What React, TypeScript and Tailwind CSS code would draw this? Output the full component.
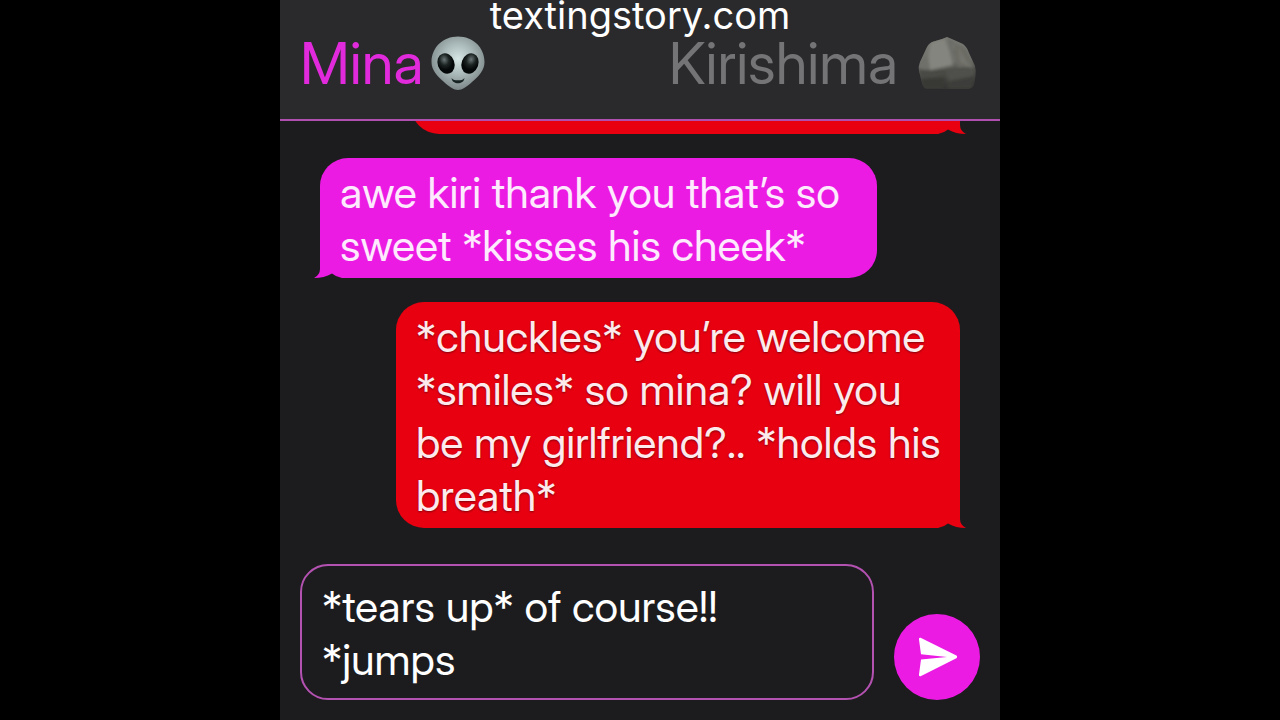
import type { ReactNode } from "react";

function AlienIcon() {
  return (
    <svg viewBox="0 0 54 54" className="size-[54px] shrink-0" role="img" aria-label="alien">
      <defs>
        <radialGradient id="skin" cx="0.5" cy="0.42" r="0.58">
          <stop offset="0" stopColor="#d6e6e5" />
          <stop offset="0.5" stopColor="#a9b8b8" />
          <stop offset="1" stopColor="#7c8788" />
        </radialGradient>
        <radialGradient id="eye" cx="0.48" cy="0.3" r="0.5">
          <stop offset="0" stopColor="#6c7676" />
          <stop offset="0.55" stopColor="#1c2323" />
          <stop offset="1" stopColor="#050808" />
        </radialGradient>
      </defs>
      <path
        d="M27 0.5C42 0.5 53.5 11.5 53.5 26C53.5 34 48 40 41 46C36 50.5 31 54 27 54C23 54 18 50.5 13 46C6 40 0.5 34 0.5 26C0.5 11.5 12 0.5 27 0.5Z"
        fill="url(#skin)"
      />
      <ellipse cx="15" cy="27.5" rx="8.4" ry="10.5" transform="rotate(-20 15 27.5)" fill="url(#eye)" />
      <ellipse cx="39" cy="27.5" rx="8.4" ry="10.5" transform="rotate(20 39 27.5)" fill="url(#eye)" />
      <path d="M20.5 42C22 44 24 44.3 27 44.3C30 44.3 32 44 33.5 42C33 46 30 47.2 27 47.2C24 47.2 21 46 20.5 42Z" fill="#172322" />
    </svg>
  );
}

function RockIcon() {
  return (
    <svg viewBox="0 0 58 54" className="h-[54px] w-[58px] shrink-0" role="img" aria-label="rock">
      <defs>
        <linearGradient id="stone" x1="0" y1="0" x2="0.15" y2="1">
          <stop offset="0" stopColor="#7d7d77" />
          <stop offset="0.55" stopColor="#6e6e69" />
          <stop offset="0.72" stopColor="#4d4d49" />
          <stop offset="1" stopColor="#343432" />
        </linearGradient>
        <filter id="soft" x="-10%" y="-10%" width="120%" height="120%">
          <feGaussianBlur stdDeviation="1.8" />
        </filter>
        <clipPath id="edge">
          <path d="M29 1L36 4L45 8Q49 11 51 17L57 30Q58 34 57.500 40L56 49Q54 53 49 53L9 53Q5 52 4 47L1 35Q0 31 2 26L8 13Q10 8 14 6L24 3Z" />
        </clipPath>
      </defs>
      <g clipPath="url(#edge)">
        <rect width="58" height="54" fill="url(#stone)" />
        <g filter="url(#soft)">
          <path d="M13 6L26 3L31 14L35 29L12 34L10 22Z" fill="#85857f" />
          <path d="M29 1L38 7L34 9L37 22L32 14Z" fill="#6b6b67" />
          <path d="M37 7L48 13L56 31L40 31L36 17Z" fill="#6a6a64" />
          <path d="M40 10L49 26L55 33L42 26Z" fill="#74746e" />
          <path d="M2 27L10 19L12 33L2 34Z" fill="#70706a" />
          <path d="M1 33L13 35L28 34L28 42L14 42L3 43Z" fill="#494945" />
          <path d="M3 43L27 41L25 53L5 53Z" fill="#383835" />
          <path d="M28 33L57 32L55 45L31 47Z" fill="#50504b" />
          <path d="M30 45L56 40L54 53L29 53Z" fill="#3e3e3a" />
        </g>
      </g>
    </svg>
  );
}

function SendIcon() {
  return (
    <svg viewBox="0 0 40 40" className="size-10" aria-hidden="true">
      <path d="M3.6 0.8L39.4 18.6Q41 20 39.4 21.2L3.600 39.2Q1.800 39.6 2 37.6L4 22.6L30 20L4 17.2L2 2.4Q1.800 0.4 3.600 0.8Z" fill="#fff" />
    </svg>
  );
}

function Tail({ className }: { className: string }) {
  return (
    <svg viewBox="0 0 28 30" className={className} aria-hidden="true">
      <path d="M6 0H28V30Q22 29 18 25.5Q10 30 0 30Q6 27 6 21Z" fill="currentColor" />
    </svg>
  );
}

function Bubble({ side, width, children }: { side: "left" | "right"; width: string; children: ReactNode }) {
  const left = side === "left";
  return (
    <div
      className={`relative shrink-0 px-5 pt-2 pb-1.5 text-[43px] leading-[53px] ${width} ${
        left ? "self-start text-[#ec1be4]" : "self-end text-[#e80011]"
      }`}
    >
      <div
        className={`absolute inset-0 rounded-[28px] bg-current ${
          left
            ? "rounded-bl-none [clip-path:polygon(0_0,100%_0,100%_100%,22px_100%,22px_calc(100%_-_30px),0_calc(100%_-_30px))]"
            : "rounded-br-none [clip-path:polygon(0_0,100%_0,100%_calc(100%_-_30px),calc(100%_-_22px)_calc(100%_-_30px),calc(100%_-_22px)_100%,0_100%)]"
        }`}
      />
      <Tail
        className={`absolute bottom-0 h-[30px] w-7 ${left ? "-left-[6px]" : "-right-[6px] -scale-x-100"}`}
      />
      <p
        className={`relative whitespace-pre ${
          left ? "text-[#fdeafd]" : "text-[#fdeaec] [text-shadow:0_1px_2px_rgba(90,0,10,0.7)]"
        }`}
      >
        {children}
      </p>
    </div>
  );
}

export default function App() {
  return (
    <div className="h-screen bg-black font-['Inter_Display','Inter','Liberation_Sans',sans-serif]">
      <main className="mx-auto flex h-full w-full max-w-[720px] flex-col bg-[#1c1c1e]">
        <header className="shrink-0 border-b-2 border-[#b04fb0] bg-[#2a2a2c] px-5 pb-6">
          <p className="text-center font-['Inter','Liberation_Sans',sans-serif] text-[38px] leading-[31px] text-white">
            textingstory.com
          </p>
          <div className="flex h-16 items-center justify-between text-[58px] leading-[64px]">
            <h1 className="flex items-center gap-2 text-[#e02adb]">
              Mina
              <AlienIcon />
            </h1>
            <h2 className="flex items-center gap-5 pr-1 text-[#747477]">
              Kirishima
              <RockIcon />
            </h2>
          </div>
        </header>

        <section
          aria-label="Conversation"
          className="flex min-h-0 flex-1 flex-col justify-end gap-6 overflow-hidden px-10 pb-9"
        >
          <Bubble side="right" width="w-[549px] h-[120px]">{null}</Bubble>
          <Bubble side="left" width="w-[557px]">{"awe kiri thank you that’s so\nsweet *kisses his cheek*"}</Bubble>
          <Bubble side="right" width="w-[564px]">
            {"*chuckles* you’re welcome\n*smiles* so mina? will you\nbe my girlfriend?.. *holds his\nbreath*"}
          </Bubble>
        </section>

        <form className="flex shrink-0 items-end gap-5 px-5 pb-5" onSubmit={(e) => e.preventDefault()}>
          <textarea
            aria-label="Message"
            rows={2}
            defaultValue={"*tears up* of course!!\n*jumps"}
            className="block min-w-0 flex-1 resize-none overflow-hidden rounded-[28px] border-2 border-[#b452b2] bg-transparent px-5 pt-3.5 pb-3 text-[43px] leading-[53px] text-white outline-none"
          />
          <button
            type="submit"
            aria-label="Send"
            className="flex size-[86px] shrink-0 items-center justify-center rounded-full bg-[#ec1be4]"
          >
            <SendIcon />
          </button>
        </form>
      </main>
    </div>
  );
}
